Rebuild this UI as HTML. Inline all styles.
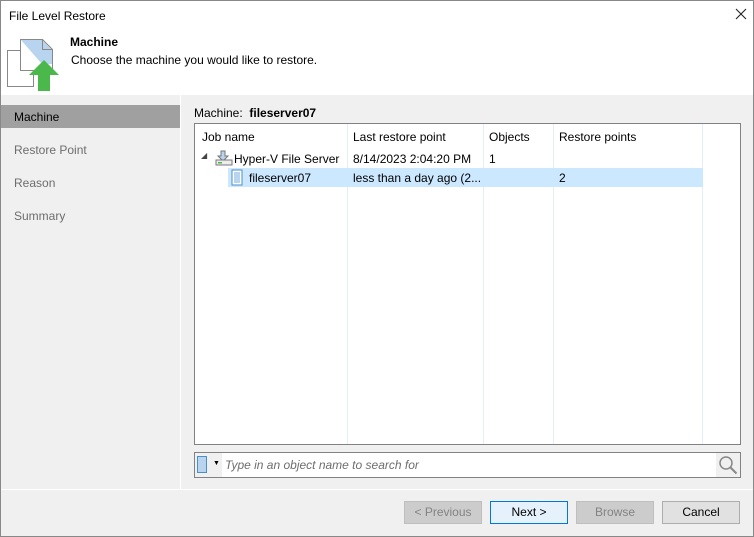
<!DOCTYPE html><html><head><style>
*{margin:0;padding:0;box-sizing:border-box}
body{width:754px;height:537px;font:12px "Liberation Sans",sans-serif;color:#000;background:#f0f0f0;position:relative;overflow:hidden}
.a{position:absolute}
.btn{position:absolute;top:501px;width:78px;height:23px;border:1px solid #adadad;background:#e1e1e1;text-align:center;line-height:21px}
</style></head><body>
<div class="a" style="left:0;top:0;width:754px;height:537px;border:1px solid #888"></div>
<div class="a" style="left:1px;top:1px;width:752px;height:94px;background:#fff"></div>
<div class="a" style="left:9px;top:9px">File Level Restore</div>
<svg class="a" style="left:735px;top:8px" width="12" height="12"><path d="M1 1l10 10M11 1L1 11" stroke="#222" stroke-width="1.1"/></svg>
<svg class="a" style="left:6px;top:36px" width="56" height="56">
<path d="M1.5 14.5h20l6 6v30h-26z" fill="#fff" stroke="#888"/>
<path d="M14.5 3.5h22l10 10v21h-32z" fill="#fff" stroke="#888"/>
<path d="M15 4h21l10 10v14l-10 0z" fill="#b8d4ee"/>
<path d="M36.5 3.5v10h10" fill="none" stroke="#888"/>
<path d="M38 24l15 15h-9v16h-12v-16h-9z" fill="#4ab84a"/>
</svg>
<div class="a" style="left:70px;top:35px;font-weight:bold">Machine</div>
<div class="a" style="left:71px;top:53px">Choose the machine you would like to restore.</div>
<div class="a" style="left:180px;top:95px;width:1px;height:394px;background:#fff"></div>
<div class="a" style="left:1px;top:105px;width:179px;height:23px;background:#a0a0a0"></div>
<div class="a" style="left:14px;top:110px">Machine</div>
<div class="a" style="left:14px;top:143px;color:#6d6d6d">Restore Point</div>
<div class="a" style="left:14px;top:176px;color:#6d6d6d">Reason</div>
<div class="a" style="left:14px;top:209px;color:#6d6d6d">Summary</div>
<div class="a" style="left:194px;top:106px">Machine:&nbsp; <b>fileserver07</b></div>
<div class="a" style="left:194px;top:123px;width:547px;height:322px;background:#fff;border:1px solid #828282"></div>
<div class="a" style="left:347px;top:124px;width:1px;height:320px;background:#e3eef8"></div>
<div class="a" style="left:483px;top:124px;width:1px;height:320px;background:#e3eef8"></div>
<div class="a" style="left:553px;top:124px;width:1px;height:320px;background:#e3eef8"></div>
<div class="a" style="left:702px;top:124px;width:1px;height:320px;background:#e3eef8"></div>
<div class="a" style="left:202px;top:130px">Job name</div>
<div class="a" style="left:353px;top:130px">Last restore point</div>
<div class="a" style="left:489px;top:130px">Objects</div>
<div class="a" style="left:559px;top:130px">Restore points</div>
<div class="a" style="left:228px;top:168px;width:475px;height:19px;background:#cce8ff"></div>
<div class="a" style="left:201px;top:151px;font-size:8px;color:#444">◢</div>
<svg class="a" style="left:215px;top:150px" width="18" height="17"><path d="M6 1h4v5h3l-5 5-5-5h3z" fill="#b8d4ee" stroke="#777"/><rect x="1" y="10" width="16" height="5" fill="#eee" stroke="#777"/><rect x="3" y="12" width="4" height="1.5" fill="#4ab84a"/></svg>
<div class="a" style="left:234px;top:152px">Hyper-V File Server</div>
<div class="a" style="left:353px;top:152px">8/14/2023 2:04:20 PM</div>
<div class="a" style="left:489px;top:152px">1</div>
<svg class="a" style="left:231px;top:169px" width="12" height="17"><rect x="1" y="1" width="10" height="15" fill="#fff" stroke="#4a90c8"/><rect x="3" y="3" width="6" height="11" fill="#b8d4ee"/></svg>
<div class="a" style="left:249px;top:171px">fileserver07</div>
<div class="a" style="left:353px;top:171px">less than a day ago (2...</div>
<div class="a" style="left:559px;top:171px">2</div>
<div class="a" style="left:194px;top:452px;width:547px;height:26px;background:#fff;border:1px solid #828282"></div>
<div class="a" style="left:195px;top:453px;width:27px;height:24px;background:#f0f0f0"></div>
<svg class="a" style="left:197px;top:456px" width="10" height="18"><rect x="0.5" y="0.5" width="9" height="16" fill="#b8d4ee" stroke="#4a90c8"/></svg>
<div class="a" style="left:213px;top:460px;font-size:7px">▼</div>
<div class="a" style="left:225px;top:458px;font-style:italic;color:#6d6d6d">Type in an object name to search for</div>
<div class="a" style="left:716px;top:453px;width:24px;height:24px;background:#f0f0f0"></div>
<svg class="a" style="left:718px;top:455px" width="20" height="20"><circle cx="8" cy="8" r="6" fill="none" stroke="#888" stroke-width="1.5"/><path d="M12.5 12.5l6 6" stroke="#888" stroke-width="2"/></svg>
<div class="a" style="left:1px;top:489px;width:752px;height:1px;background:#fff"></div>
<div class="btn" style="left:404px;background:#ccc;border-color:#bfbfbf;color:#838383">&lt; Previous</div>
<div class="btn" style="left:490px;background:#e5f1fb;border-color:#0078d7">Next &gt;</div>
<div class="btn" style="left:576px;background:#ccc;border-color:#bfbfbf;color:#838383">Browse</div>
<div class="btn" style="left:662px">Cancel</div>
</body></html>
